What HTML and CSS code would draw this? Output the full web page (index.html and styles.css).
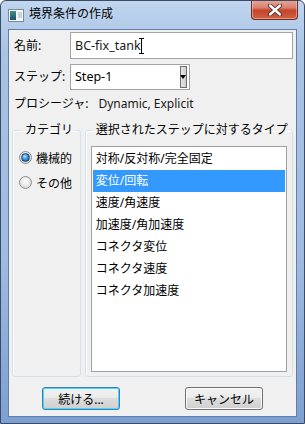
FILE: index.html
```html
<!DOCTYPE html>
<html lang="ja">
<head>
    <meta charset="UTF-8">
    <title>境界条件の作成</title>
    <link rel="stylesheet" href="styles.css">
</head>
<body>
    <div class="window">
        <div class="titlebar">
            <svg class="app-icon" width="16" height="13" viewBox="0 0 16 13">
                <defs>
                    <linearGradient id="pane" x1="0" y1="0" x2="0" y2="1">
                        <stop offset="0" stop-color="#3f8f86"/>
                        <stop offset="1" stop-color="#1c4f6a"/>
                    </linearGradient>
                </defs>
                <rect x="0.5" y="0.5" width="15" height="12" fill="#f4f7fa" stroke="#7d8a96"/>
                <rect x="2" y="2" width="6" height="9" fill="url(#pane)"/>
                <rect x="10" y="3" width="4" height="6" fill="#c9d3dc"/>
            </svg>
            <span class="title">境界条件の作成</span>
            <div class="close-btn">
                <svg width="16" height="12" viewBox="0 0 16 12">
                    <path d="M3 1.5 L13 10.5 M13 1.5 L3 10.5" stroke="#4a2a26" stroke-width="4.2" stroke-linecap="round"/>
                    <path d="M3 1.5 L13 10.5 M13 1.5 L3 10.5" stroke="#ffffff" stroke-width="2.4" stroke-linecap="round"/>
                </svg>
            </div>
        </div>

        <div class="client">
            <div class="form-row name-row">
                <span class="label">名前:</span>
                <div class="textbox">BC-fix_tank<span class="ibeam"></span></div>
            </div>
            <div class="form-row step-row">
                <span class="label">ステップ:</span>
                <div class="combo">
                    <span class="combo-text">Step-1</span>
                    <span class="combo-btn"><span class="arrow"></span></span>
                </div>
            </div>
            <div class="procedure">プロシージャ:<span class="proc-value">Dynamic, Explicit</span></div>

            <div class="groups">
                <fieldset class="group category">
                    <legend>カテゴリ</legend>
                    <div class="radio-row"><span class="radio checked"></span>機械的</div>
                    <div class="radio-row"><span class="radio"></span>その他</div>
                </fieldset>
                <fieldset class="group types">
                    <legend>選択されたステップに対するタイプ</legend>
                    <ul class="listbox">
                        <li>対称/反対称/完全固定</li>
                        <li class="selected">変位/回転</li>
                        <li>速度/角速度</li>
                        <li>加速度/角加速度</li>
                        <li>コネクタ変位</li>
                        <li>コネクタ速度</li>
                        <li>コネクタ加速度</li>
                    </ul>
                </fieldset>
            </div>

            <div class="buttons">
                <button class="btn default">続ける...</button>
                <button class="btn">キャンセル</button>
            </div>
        </div>
    </div>
</body>
</html>
```

FILE: styles.css
```css
* {
    margin: 0;
    padding: 0;
    box-sizing: border-box;
}

body {
    font-family: "Noto Sans", "Noto Sans CJK JP", sans-serif;
    font-size: 12px;
    color: #000000;
    background: #ffffff;
}

.window {
    width: 305px;
    height: 424px;
    border: 1px solid #3a4b63;
    border-radius: 6px 6px 0 0;
    background: linear-gradient(180deg, #c0d5ee 0%, #a9c3e4 12%, #9fbbe0 60%, #7d9fd2 100%);
    display: flex;
    flex-direction: column;
    overflow: hidden;
}

.titlebar {
    height: 28px;
    display: flex;
    align-items: flex-start;
    position: relative;
}

.app-icon {
    margin: 8px 0 0 7px;
}

.title {
    margin: 5px 0 0 5px;
    line-height: 16px;
    font-size: 12px;
}

.close-btn {
    position: absolute;
    top: -1px;
    right: 6px;
    width: 47px;
    height: 20px;
    border: 1px solid #6b2d25;
    border-top: none;
    border-radius: 0 0 4px 4px;
    background: linear-gradient(180deg, #e8a89b 0%, #d9806d 40%, #c3442c 55%, #d2613f 100%);
    box-shadow: inset 0 0 0 1px rgba(255, 220, 210, 0.45);
    display: flex;
    justify-content: center;
    align-items: center;
}

.client {
    height: 388px;
    margin: 0 7px;
    border: 1px solid #627da6;
    background: #f0f0f0;
    display: flex;
    flex-direction: column;
    padding: 0 3px 0 3px;
}

.form-row {
    display: flex;
    align-items: center;
}

.label {
    width: 58px;
    padding-left: 2px;
    line-height: 16px;
}

.name-row {
    margin-top: 2px;
}

.textbox {
    position: relative;
    flex: 1;
    height: 27px;
    background: #ffffff;
    border: 1px solid #a4a4a4;
    padding-left: 4px;
    font-size: 12.5px;
    line-height: 25px;
    color: #1a1a1a;
}

.ibeam {
    position: absolute;
    left: 68px;
    top: 5px;
    width: 5px;
    height: 16px;
    border-top: 1px solid #000;
    border-bottom: 1px solid #000;
}

.ibeam::after {
    content: "";
    position: absolute;
    left: 2px;
    top: 0;
    width: 1px;
    height: 14px;
    background: #000;
}

.step-row {
    margin-top: 5px;
}

.combo {
    width: 120px;
    height: 26px;
    background: #ffffff;
    border: 1px solid #a4a4a4;
    display: flex;
    align-items: stretch;
    padding: 1px 1px 1px 4px;
}

.combo-text {
    flex: 1;
    line-height: 22px;
    font-size: 12.5px;
}

.combo-btn {
    width: 7px;
    margin-right: 1px;
    background: linear-gradient(90deg, #e6e6e6, #cfcfcf);
    border: 1px solid #6d6d6d;
    position: relative;
}

.arrow {
    position: absolute;
    right: 0;
    top: 8px;
    width: 0;
    height: 0;
    border-left: 3px solid transparent;
    border-right: 3px solid transparent;
    border-top: 4px solid #000;
}

.procedure {
    margin-top: 6px;
    padding-left: 2px;
    line-height: 16px;
}

.proc-value {
    margin-left: 10px;
    color: #1a1a1a;
}

.groups {
    margin-top: 10px;
    height: 255px;
    display: flex;
    gap: 4px;
}

.group {
    border: 1px solid #d5dfe5;
    border-radius: 3px;
    box-shadow: inset 1px 1px 0 #ffffff;
    min-width: 0;
}

.group legend {
    line-height: 16px;
    padding: 0 3px;
    white-space: nowrap;
}

.category {
    width: 69px;
    padding: 7px 0 0 6px;
}

.category legend {
    margin-left: 3px;
}

.types {
    width: 209px;
    padding: 8px 5px 4px 5px;
}

.types legend {
    margin-left: 2px;
}

.radio-row {
    height: 25px;
    display: flex;
    align-items: center;
    gap: 4px;
}

.radio {
    width: 13px;
    height: 13px;
    border-radius: 50%;
    border: 1px solid #8e8f8f;
    background: radial-gradient(circle at 50% 40%, #ffffff 0%, #e6e6e6 55%, #c8c8c8 100%);
    display: flex;
    justify-content: center;
    align-items: center;
}

.radio.checked::after {
    content: "";
    width: 7px;
    height: 7px;
    border-radius: 50%;
    border: 1px solid #1a4670;
    background: radial-gradient(circle at 40% 35%, #b6e3ff 0%, #3a93d8 45%, #0e4d8c 100%);
}

.listbox {
    list-style: none;
    height: 100%;
    background: #ffffff;
    border: 1px solid #a0a0a0;
    padding: 1px 1px 0 1px;
}

.listbox li {
    height: 22px;
    line-height: 22px;
    padding-left: 3px;
    white-space: nowrap;
}

.listbox li.selected {
    background: #3399ff;
    color: #ffffff;
}

.buttons {
    margin-top: 10px;
    padding-left: 30px;
    display: flex;
    gap: 65px;
}

.btn {
    width: 78px;
    height: 23px;
    font: inherit;
    font-size: 12px;
    border: 1px solid #707070;
    border-radius: 3px;
    background: linear-gradient(180deg, #f2f2f2 0%, #ebebeb 45%, #dddddd 50%, #cfcfcf 100%);
    box-shadow: inset 0 0 0 1px #fcfcfc;
    color: #000000;
}

.btn.default {
    border-color: #3c7fb1;
    box-shadow: inset 0 0 0 1px #48d7fb;
}
```
